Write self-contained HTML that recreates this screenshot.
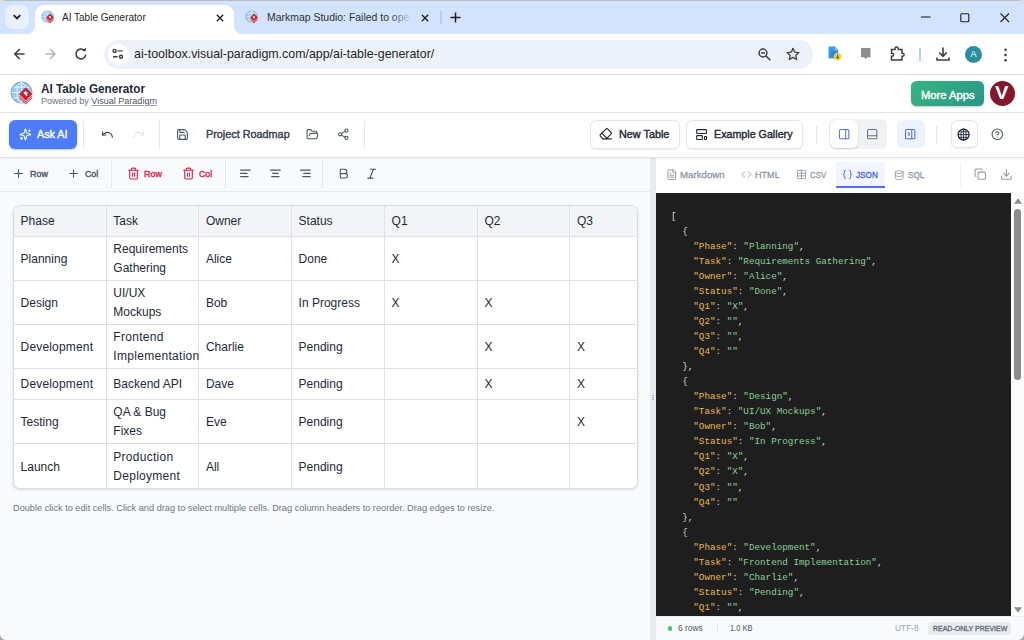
<!DOCTYPE html>
<html lang="en">
<head>
<meta charset="utf-8">
<title>AI Table Generator</title>
<style>
*{box-sizing:border-box;margin:0;padding:0}
html,body{width:1024px;height:640px;overflow:hidden;background:#fff;font-family:"Liberation Sans",sans-serif;color:#1f2937}
.abs{position:absolute}
svg{display:block;position:absolute;overflow:visible}
.ic{fill:none;stroke:currentColor;stroke-width:2;stroke-linecap:round;stroke-linejoin:round}
.t{position:absolute;white-space:nowrap;transform-origin:0 0;line-height:1}
.b{font-weight:bold}
.sb{-webkit-text-stroke:.4px}
.sb2{-webkit-text-stroke:.32px}
/* ---------- browser chrome ---------- */
#tabstrip{position:absolute;left:0;top:0;width:1024px;height:34px;background:#d3e3fd;box-shadow:inset 0 1px 0 #b9bcc2}
#tab1{position:absolute;left:35px;top:5px;width:199px;height:29px;background:#fff;border-radius:9px 9px 0 0}
#navbar{position:absolute;left:0;top:35px;width:1024px;height:40px;background:#fff;border-bottom:1px solid #dde1e8}
#urlpill{position:absolute;left:104px;top:4.5px;width:708.5px;height:29px;border-radius:14.5px;background:#edf2fa}
/* ---------- app header ---------- */
#apphead{position:absolute;left:0;top:75px;width:1024px;height:38px;background:#fff;border-bottom:1px solid #e3e5ea}
#moreapps{position:absolute;left:911.4px;top:5.6px;width:72.4px;height:25px;border-radius:5.5px;background:linear-gradient(135deg,#37b481,#2a9689);box-shadow:0 1px 2px rgba(0,0,0,.22)}
#avatar{position:absolute;left:989.5px;top:5.5px;width:25px;height:25px;border-radius:50%;background:#86162c}
/* ---------- main toolbar ---------- */
#maintb{position:absolute;left:0;top:113px;width:1024px;height:45px;background:#fff;border-bottom:1px solid #dfe2e8;box-shadow:0 1px 2px rgba(0,0,0,.06);z-index:2}
#askai{position:absolute;left:9.4px;top:7px;width:67.9px;height:28.6px;border-radius:6px;background:#4d7cf8;box-shadow:0 1px 2px rgba(60,90,200,.35)}
.vsep{position:absolute;width:1px;background:#e5e7eb}
.btn{position:absolute;height:28.5px;border:1px solid #e3e6eb;border-radius:6px;background:#fff;box-shadow:0 1px 2px rgba(0,0,0,.07)}
/* ---------- left pane ---------- */
#left{position:absolute;left:0;top:158px;width:650px;height:482px;background:#f8fafc}
#ltb{position:absolute;left:0;top:0;width:650px;height:34px;background:#f8fafc;border-bottom:1px solid #e8eaee}
#tblwrap{position:absolute;left:12.5px;top:46.5px;width:625.4px;height:284px;border:1px solid #d8dbe2;border-radius:7px;overflow:hidden;background:#fff;box-shadow:0 1px 3px rgba(0,0,0,.12)}
.hl{position:absolute;left:0;width:626px;height:1px;background:#dfe1e8}
.vl{position:absolute;top:0;width:1px;height:284px;background:#dfe1e8}
.c{position:absolute;white-space:nowrap;font-size:12px;line-height:18.75px;color:#1f2937}
/* ---------- splitter ---------- */
#split{position:absolute;left:650px;top:158px;width:6px;height:482px;background:#e9ebf0}
#split i{position:absolute;left:2px;top:237px;width:2px;height:6px;background:repeating-linear-gradient(180deg,#aeb3bd 0 1px,transparent 1px 2px)}
/* ---------- right pane ---------- */
#right{position:absolute;left:656px;top:158px;width:368px;height:482px;background:#fff}
#code{position:absolute;left:0;top:35px;width:355px;height:422.6px;background:#1e1e1e;overflow:hidden}
pre{position:absolute;left:15.4px;top:15.7px;font-family:"Liberation Mono",monospace;font-size:9.7px;line-height:15.040px;color:#d4d4d4;white-space:pre;transform-origin:0 0;transform:scaleX(.957)}
.k{color:#e8ba52}.s{color:#8ad097}
#sbar{position:absolute;left:355px;top:35px;width:13px;height:423px;background:#fbfbfb}
#status{position:absolute;left:0;top:457.6px;width:368px;height:24.4px;background:#f9fafb;border-top:1px solid #eceef1;font-size:9px;color:#6b7280}
</style>
</head>
<body>
<!-- ================= browser chrome ================= -->
<div id="tabstrip">
  <div class="abs" style="left:5px;top:5px;width:24px;height:24px;border-radius:8px;background:#e9f0fe"></div>
  <svg style="left:12.2px;top:13.2px" width="10" height="8" viewBox="0 0 10 8"><path d="M1.7 2.2 L5 5.5 L8.3 2.2" fill="none" stroke="#1f1f1f" stroke-width="1.8"/></svg>
  <div id="tab1"></div>
  <!-- tab flare curves -->
  <svg style="left:27px;top:26px" width="8" height="8" viewBox="0 0 8 8"><path d="M8 0 V8 H0 A8 8 0 0 0 8 0Z" fill="#fff"/></svg>
  <svg style="left:234px;top:26px" width="8" height="8" viewBox="0 0 8 8"><path d="M0 0 V8 H8 A8 8 0 0 1 0 0Z" fill="#fff"/></svg>
  <!-- favicon 1 -->
  <svg style="left:41.2px;top:9.9px" width="13.2" height="13.2" viewBox="0 0 24 24"><circle cx="12" cy="12" r="10.8" fill="#93cdf1" stroke="#8fa9b3" stroke-width="1.2"/><g fill="none" stroke="#e8f5fd" stroke-width="1"><path d="M1.5 12 H22.5 M3.5 6.5 H20.5 M3.5 17.5 H20.5"/><ellipse cx="12" cy="12" rx="4.8" ry="10.5"/><path d="M12 1.5 V22.5"/></g><path d="M16.4 10.5 L23.4 17.5 L16.4 24.5 L9.4 17.5 Z" fill="#c8202f"/><path d="M16.4 9.4 L23.4 16.4 L16.4 23.4 L9.4 16.4 Z" fill="#fff"/><path d="M16.4 8.6 L23.4 15.6 L16.4 22.6 L9.4 15.6 Z" fill="#c8202f"/><path d="M16.4 7.5 L23.4 14.5 L16.4 21.5 L9.4 14.5 Z" fill="#fff"/><path d="M16.4 6.5 L23.4 13.5 L16.4 20.5 L9.4 13.5 Z" fill="#c8202f"/><path d="M16.2 10.4 L18.6 12.8 L17.4 14 L18.4 15 L17.4 16 L14 12.6 Z" fill="#fff"/></svg>
  <div class="t" style="left:62px;top:12.2px;font-size:11.3px;color:#1f1f1f;transform:scaleX(.885)">AI Table Generator</div>
  <svg style="left:216px;top:13.5px" width="8" height="8" viewBox="0 0 8 8"><path d="M0.8 0.8 L7.2 7.2 M7.2 0.8 L0.8 7.2" stroke="#1f1f1f" stroke-width="1.35" fill="none"/></svg>
  <!-- tab 2 -->
  <svg style="left:245.4px;top:9.9px" width="13.2" height="13.2" viewBox="0 0 24 24"><circle cx="12" cy="12" r="10.8" fill="#93cdf1" stroke="#8fa9b3" stroke-width="1.2"/><g fill="none" stroke="#e8f5fd" stroke-width="1"><path d="M1.5 12 H22.5 M3.5 6.5 H20.5 M3.5 17.5 H20.5"/><ellipse cx="12" cy="12" rx="4.8" ry="10.5"/><path d="M12 1.5 V22.5"/></g><path d="M16.4 10.5 L23.4 17.5 L16.4 24.5 L9.4 17.5 Z" fill="#c8202f"/><path d="M16.4 9.4 L23.4 16.4 L16.4 23.4 L9.4 16.4 Z" fill="#fff"/><path d="M16.4 8.6 L23.4 15.6 L16.4 22.6 L9.4 15.6 Z" fill="#c8202f"/><path d="M16.4 7.5 L23.4 14.5 L16.4 21.5 L9.4 14.5 Z" fill="#fff"/><path d="M16.4 6.5 L23.4 13.5 L16.4 20.5 L9.4 13.5 Z" fill="#c8202f"/><path d="M16.2 10.4 L18.6 12.8 L17.4 14 L18.4 15 L17.4 16 L14 12.6 Z" fill="#fff"/></svg>
  <div class="abs" style="left:266.5px;top:8px;width:145px;height:18px;overflow:hidden"><div class="t" style="left:0;top:4.2px;font-size:11.3px;color:#2d3034;transform:scaleX(.925)">Markmap Studio: Failed to open</div><div class="abs" style="right:0;top:0;width:22px;height:18px;background:linear-gradient(90deg,rgba(211,227,253,0),#d3e3fd)"></div></div>
  <svg style="left:420.5px;top:13.5px" width="8" height="8" viewBox="0 0 8 8"><path d="M0.8 0.8 L7.2 7.2 M7.2 0.8 L0.8 7.2" stroke="#1f1f1f" stroke-width="1.35" fill="none"/></svg>
  <div class="abs" style="left:440px;top:11px;width:1.5px;height:12.5px;background:#b4cbf7"></div>
  <svg style="left:449.5px;top:12px" width="11" height="11" viewBox="0 0 11 11"><path d="M5.5 0.5 V10.5 M0.5 5.5 H10.5" stroke="#1f1f1f" stroke-width="1.5" fill="none"/></svg>
  <!-- window controls -->
  <svg style="left:921px;top:16.2px" width="10" height="2" viewBox="0 0 10 2"><path d="M0 1 H9.5" stroke="#1f1f1f" stroke-width="1.1"/></svg>
  <svg style="left:960px;top:12.6px" width="10" height="10" viewBox="0 0 10 10"><rect x="0.8" y="0.8" width="8" height="8" rx="1" fill="none" stroke="#1f1f1f" stroke-width="1.1"/></svg>
  <svg style="left:999.5px;top:12.6px" width="10" height="10" viewBox="0 0 10 10"><path d="M0.5 0.5 L9 9 M9 0.5 L0.5 9" stroke="#1f1f1f" stroke-width="1.1" fill="none"/></svg>
</div>
<div id="navbar">
  <!-- back / forward / reload -->
  <svg style="left:13px;top:12px" width="14" height="14" viewBox="0 0 14 14"><path d="M11.6 7 H2 M6.8 2 L1.8 7 L6.8 12" fill="none" stroke="#3c4043" stroke-width="1.6"/></svg>
  <svg style="left:43px;top:12px" width="14" height="14" viewBox="0 0 14 14"><path d="M2.2 7 H11.8 M7 2 L12 7 L7 12" fill="none" stroke="#b4b7bb" stroke-width="1.6"/></svg>
  <svg style="left:74px;top:12px" width="14" height="14" viewBox="0 0 14 14"><path d="M11.8 7.6 A4.9 4.9 0 1 1 10.3 3.4" fill="none" stroke="#3c4043" stroke-width="1.6"/><path d="M8 4.3 H11.8 V0.5 Z" fill="#3c4043"/></svg>
  <div id="urlpill">
    <div class="abs" style="left:3.5px;top:4.2px;width:21px;height:21px;border-radius:10.5px;background:#fff"></div>
    <svg style="left:8px;top:8.7px" width="12" height="12" viewBox="0 0 12 12"><g fill="none" stroke="#3c4043" stroke-width="1.4"><path d="M5.6 2.9 H10.6 M1 8.7 H5.6"/><circle cx="2.6" cy="2.9" r="1.5"/><circle cx="9" cy="8.7" r="1.5"/></g></svg>
    <div class="t" style="left:30px;top:7.5px;font-size:13px;color:#1f1f1f;transform:scaleX(.953)">ai-toolbox.visual-paradigm.com/app/ai-table-generator/</div>
    <!-- zoom & star -->
    <svg style="left:654px;top:8.5px" width="13" height="13" viewBox="0 0 13 13"><g fill="none" stroke="#3c4043" stroke-width="1.5"><circle cx="5" cy="5" r="3.9"/><path d="M8 8 L12.3 12.3 M3 5 H7"/></g></svg>
    <svg style="left:680.5px;top:6.5px" width="16" height="16" viewBox="0 0 24 24"><path d="M12 3.5 L14.6 9.3 L20.9 9.9 L16.1 14.1 L17.5 20.3 L12 17 L6.5 20.3 L7.9 14.1 L3.1 9.9 L9.4 9.3 Z" fill="none" stroke="#3c4043" stroke-width="2" stroke-linejoin="round"/></svg>
  </div>
  <!-- extension icons -->
  <svg style="left:828px;top:10.5px" width="15" height="18" viewBox="0 0 15 18"><path d="M0.5 1.5 Q0.5 0.5 1.5 0.5 H6.8 L10.2 3.9 V11.5 Q10.2 12.5 9.2 12.5 H1.5 Q0.5 12.5 0.5 11.5 Z" fill="#3f97ea"/><path d="M6.8 0.5 L10.2 3.9 H6.8 Z" fill="#6fd0d8"/><path d="M2.5 6 H7.5 M2.5 8 H7.5 M2.5 10 H5.5" stroke="#2a6fc0" stroke-width="0.9"/><circle cx="9.6" cy="10.7" r="3.7" fill="#f4cf2b"/><path d="M9.6 8.7 V12.2 M8.1 10.9 L9.6 12.4 L11.1 10.9" stroke="#5a4700" stroke-width="0.9" fill="none"/></svg>
  <svg style="left:861.3px;top:13.4px" width="10" height="12" viewBox="0 0 10 12"><path d="M0 0 H9.5 V9.2 H6.3 L4.75 11.3 L3.2 9.2 H0 Z" fill="#8d8d8d"/></svg>
  <svg style="left:889px;top:10.3px" width="16" height="16" viewBox="0 0 16 16"><path d="M2.5 4.4 H6 V3.7 A1.6 1.6 0 1 1 9.2 3.7 V4.4 H13 V8.2 H13.6 A1.5 1.5 0 1 1 13.6 11.2 H13 V15 H2.5 V11.2 H3.1 A1.5 1.5 0 1 0 3.1 8.2 H2.5 Z" fill="none" stroke="#3c4043" stroke-width="1.5" stroke-linejoin="miter"/></svg>
  <div class="abs" style="left:919px;top:13px;width:1.5px;height:12.5px;background:#b9cef7"></div>
  <svg style="left:935.5px;top:12px" width="14" height="14" viewBox="0 0 14 14"><path d="M7 0.5 V9 M3.2 5.5 L7 9.3 L10.8 5.5 M1 10.5 V13 H13 V10.5" fill="none" stroke="#3c4043" stroke-width="1.6"/></svg>
  <div class="abs" style="left:965px;top:10.5px;width:17px;height:17px;border-radius:50%;background:#2b8e9e"></div>
  <div class="t" style="left:970.5px;top:15px;font-size:9px;color:#fff">A</div>
  <svg style="left:1003.5px;top:12.5px" width="3" height="14" viewBox="0 0 3 14"><circle cx="1.5" cy="1.7" r="1.3" fill="#3c4043"/><circle cx="1.5" cy="7" r="1.3" fill="#3c4043"/><circle cx="1.5" cy="12.3" r="1.3" fill="#3c4043"/></svg>
</div>
<!-- ================= app header ================= -->
<div id="apphead">
  <svg style="left:10px;top:5.5px" width="23" height="23" viewBox="0 0 24 24"><circle cx="12" cy="12" r="10.8" fill="#93cdf1" stroke="#8fa9b3" stroke-width="1.2"/><g fill="none" stroke="#e8f5fd" stroke-width="1"><path d="M1.5 12 H22.5 M3.5 6.5 H20.5 M3.5 17.5 H20.5"/><ellipse cx="12" cy="12" rx="4.8" ry="10.5"/><path d="M12 1.5 V22.5"/></g><path d="M16.4 10.5 L23.4 17.5 L16.4 24.5 L9.4 17.5 Z" fill="#c8202f"/><path d="M16.4 9.4 L23.4 16.4 L16.4 23.4 L9.4 16.4 Z" fill="#fff"/><path d="M16.4 8.6 L23.4 15.6 L16.4 22.6 L9.4 15.6 Z" fill="#c8202f"/><path d="M16.4 7.5 L23.4 14.5 L16.4 21.5 L9.4 14.5 Z" fill="#fff"/><path d="M16.4 6.5 L23.4 13.5 L16.4 20.5 L9.4 13.5 Z" fill="#c8202f"/><path d="M16.2 10.4 L18.6 12.8 L17.4 14 L18.4 15 L17.4 16 L14 12.6 Z" fill="#fff"/></svg>
  <div class="t b" style="left:41.3px;top:7.6px;font-size:12.3px;color:#1f2937;transform:scaleX(.953)">AI Table Generator</div>
  <div class="t" style="left:41.3px;top:22px;font-size:9px;color:#6b7280;transform:scaleX(1.005)">Powered by <u style="color:#4b5563;text-decoration-color:#9ca3af">Visual Paradigm</u></div>
  <div id="moreapps"></div>
  <div class="t sb" style="left:920.8px;top:14.5px;font-size:11.4px;color:#fff;transform:scaleX(0.986)">More Apps</div>
  <div id="avatar"></div>
  <div class="t b" style="left:995px;top:8.9px;font-size:18.7px;color:#fff;transform:scaleX(1.08)">V</div>
</div>

<!-- ================= main toolbar ================= -->
<div id="maintb">
  <div id="askai"></div>
  <svg class="ic" viewBox="0 0 24 24" style="left:18.65px;top:14.8px;width:12.8px;height:12.8px;color:#fff"><path d="M9.937 15.5A2 2 0 0 0 8.5 14.063l-6.135-1.582a.5.5 0 0 1 0-.962L8.5 9.936A2 2 0 0 0 9.937 8.5l1.582-6.135a.5.5 0 0 1 .963 0L14.063 8.5A2 2 0 0 0 15.5 9.937l6.135 1.581a.5.5 0 0 1 0 .964L15.5 14.063a2 2 0 0 0-1.437 1.437l-1.582 6.135a.5.5 0 0 1-.963 0z"/><path d="M19.5 3.3v3.4"/><path d="M21.2 5h-3.4"/><circle cx="4.6" cy="19.4" r="1.7" fill="#fff"/></svg>
  <div class="t sb" style="left:37.2px;top:15.8px;font-size:11.4px;color:#fff;transform:scaleX(0.944)">Ask AI</div>
  <div class="vsep" style="left:83px;top:8px;height:27px"></div>
  <svg class="ic" viewBox="0 0 24 24" style="left:101px;top:14.9px;width:13px;height:13px;color:#374151"><path d="M3 7v6h6"/><path d="M21 17a9 9 0 0 0-9-9 9 9 0 0 0-6 2.3L3 13"/></svg>
  <svg class="ic" viewBox="0 0 24 24" style="left:131.9px;top:14.9px;width:13px;height:13px;color:#dfe2e7"><path d="M21 7v6h-6"/><path d="M3 17a9 9 0 0 1 9-9 9 9 0 0 1 6 2.3l3 2.7"/></svg>
  <div class="vsep" style="left:159px;top:8px;height:27px"></div>
  <svg class="ic" viewBox="0 0 24 24" style="left:176px;top:14.6px;width:13px;height:13px;color:#4b5563"><path d="M15.2 3a2 2 0 0 1 1.4.6l3.8 3.8a2 2 0 0 1 .6 1.4V19a2 2 0 0 1-2 2H5a2 2 0 0 1-2-2V5a2 2 0 0 1 2-2z"/><path d="M17 21v-7a1 1 0 0 0-1-1H8a1 1 0 0 0-1 1v7"/><path d="M7 3v4a1 1 0 0 0 1 1h7"/></svg>
  <div class="t sb" style="left:206px;top:16px;font-size:10.6px;color:#374151;transform:scaleX(1.022)">Project Roadmap</div>
  <svg class="ic" viewBox="0 0 24 24" style="left:306.35px;top:14.55px;width:12.9px;height:12.9px;color:#4b5563"><path d="m6 14 1.5-2.9A2 2 0 0 1 9.24 10H20a2 2 0 0 1 1.94 2.5l-1.54 6a2 2 0 0 1-1.95 1.5H4a2 2 0 0 1-2-2V5a2 2 0 0 1 2-2h3.9a2 2 0 0 1 1.69.9l.81 1.2a2 2 0 0 0 1.67.9H18a2 2 0 0 1 2 2v2"/></svg>
  <svg class="ic" viewBox="0 0 24 24" style="left:337.45px;top:14.7px;width:12.6px;height:12.6px;color:#4b5563"><circle cx="18" cy="5" r="3"/><circle cx="6" cy="12" r="3"/><circle cx="18" cy="19" r="3"/><line x1="8.59" x2="15.42" y1="13.51" y2="17.49"/><line x1="15.41" x2="8.59" y1="6.51" y2="10.49"/></svg>
  <div class="vsep" style="left:364px;top:8px;height:27px"></div>

  <div class="btn" style="left:589.5px;top:7px;width:90px"></div>
  <svg class="ic" viewBox="0 0 24 24" style="left:599px;top:14.4px;width:13.5px;height:13.5px;color:#1f2937"><path d="m7 21-4.3-4.3c-1-1-1-2.5 0-3.4l9.6-9.6c1-1 2.5-1 3.4 0l5.6 5.6c1 1 1 2.5 0 3.4L13 21"/><path d="M22 21H7"/><path d="m5 11 9 9"/></svg>
  <div class="t sb" style="left:619px;top:16px;font-size:10.6px;color:#1f2937;transform:scaleX(1.022)">New Table</div>
  <div class="btn" style="left:686px;top:7px;width:117px"></div>
  <svg class="ic" viewBox="0 0 24 24" style="left:695.4px;top:14.6px;width:13.1px;height:13.1px;color:#1f2937"><rect width="18" height="7" x="3" y="3" rx="1"/><rect width="10.5" height="7" x="3" y="14" rx="1"/><rect width="3.6" height="5.4" x="17.4" y="15.6" rx="0.8"/></svg>
  <div class="t sb" style="left:714.2px;top:16px;font-size:10.6px;color:#1f2937;transform:scaleX(1.01)">Example Gallery</div>
  <div class="vsep" style="left:815.5px;top:12.5px;height:17.5px"></div>
  <!-- segmented control -->
  <div class="abs" style="left:829px;top:5.5px;width:58px;height:30.5px;border-radius:7px;background:#f1f2f5"></div>
  <div class="abs" style="left:829.5px;top:6.5px;width:28.5px;height:28.5px;border-radius:6px;background:#fff;box-shadow:0 1px 2px rgba(0,0,0,.18)"></div>
  <svg class="ic" viewBox="0 0 24 24" style="left:837.65px;top:15.05px;width:12.4px;height:12.4px;color:#4f6ef7"><rect width="18" height="18" x="3" y="3" rx="2"/><path d="M15 3v18"/></svg>
  <svg class="ic" viewBox="0 0 24 24" style="left:865.7px;top:15.05px;width:12.4px;height:12.4px;color:#6b7280"><rect width="18" height="18" x="3" y="3" rx="2"/><path d="M3 15h18"/></svg>
  <div class="abs" style="left:897px;top:7.3px;width:27.5px;height:28px;border-radius:6px;background:#ecf2ff"></div>
  <svg class="ic" viewBox="0 0 24 24" style="left:904.3px;top:15.05px;width:12.4px;height:12.4px;color:#4f6ef7"><rect width="18" height="18" x="3" y="3" rx="2"/><path d="M15 3v18"/><path d="m8 9 3 3-3 3"/></svg>
  <div class="vsep" style="left:936px;top:12.5px;height:17.5px"></div>
  <div class="btn" style="left:950.5px;top:7.3px;width:27px;height:28px"></div>
  <svg class="ic" viewBox="0 0 24 24" style="left:957.4px;top:14.7px;width:13.2px;height:13.2px;color:#111827;stroke-width:2.1"><circle cx="12" cy="12" r="10"/><g stroke-width="1.45"><ellipse cx="12" cy="12" rx="4.8" ry="10"/><path d="M12 2v20"/><path d="M2 12h20"/><path d="M3.6 7h16.8"/><path d="M3.6 17h16.8"/></g></svg>
  <svg class="ic" viewBox="0 0 24 24" style="left:991.2px;top:14.9px;width:12.65px;height:12.65px;color:#4b5563"><circle cx="12" cy="12" r="10"/><path d="M9.09 9a3 3 0 0 1 5.83 1c0 2-3 3-3 3"/><path d="M12 17h.01"/></svg>
</div>
<!-- ================= left pane ================= -->
<div id="left">
 <div id="ltb">
  <svg class="ic" viewBox="0 0 24 24" style="left:11.55px;top:9.05px;width:13.1px;height:13.1px;color:#4b5563;stroke-width:2"><path d="M5 12h14"/><path d="M12 5v14"/></svg>
  <div class="t sb" style="left:29.6px;top:10.95px;font-size:9.7px;color:#4b5563;transform:scaleX(0.922)">Row</div>
  <svg class="ic" viewBox="0 0 24 24" style="left:67.35px;top:9.05px;width:13.1px;height:13.1px;color:#4b5563;stroke-width:2"><path d="M5 12h14"/><path d="M12 5v14"/></svg>
  <div class="t sb" style="left:84.8px;top:10.95px;font-size:9.7px;color:#4b5563;transform:scaleX(0.907)">Col</div>
  <div class="vsep" style="left:111px;top:2px;height:28px"></div>
  <svg class="ic" viewBox="0 0 24 24" style="left:126.9px;top:9px;width:13px;height:13px;color:#e11d48;stroke-width:2"><path d="M3 6h18"/><path d="M19 6v14c0 1-1 2-2 2H7c-1 0-2-1-2-2V6"/><path d="M8 6V4c0-1 1-2 2-2h4c1 0 2 1 2 2v2"/><line x1="10" x2="10" y1="11" y2="17"/><line x1="14" x2="14" y1="11" y2="17"/></svg>
  <div class="t sb" style="left:144px;top:10.95px;font-size:9.7px;color:#e11d48;transform:scaleX(0.922)">Row</div>
  <svg class="ic" viewBox="0 0 24 24" style="left:181.9px;top:9px;width:13px;height:13px;color:#e11d48;stroke-width:2"><path d="M3 6h18"/><path d="M19 6v14c0 1-1 2-2 2H7c-1 0-2-1-2-2V6"/><path d="M8 6V4c0-1 1-2 2-2h4c1 0 2 1 2 2v2"/><line x1="10" x2="10" y1="11" y2="17"/><line x1="14" x2="14" y1="11" y2="17"/></svg>
  <div class="t sb" style="left:198.9px;top:10.95px;font-size:9.7px;color:#e11d48;transform:scaleX(0.907)">Col</div>
  <div class="vsep" style="left:225px;top:2px;height:28px"></div>
  <svg class="ic" viewBox="0 0 24 24" style="left:239.2px;top:9.2px;width:12.8px;height:12.8px;color:#4b5563;stroke-width:2.2"><path d="M15 12H3"/><path d="M17 18H3"/><path d="M21 6H3"/></svg>
  <svg class="ic" viewBox="0 0 24 24" style="left:268.7px;top:9.2px;width:12.8px;height:12.8px;color:#4b5563;stroke-width:2.2"><path d="M17 12H7"/><path d="M19 18H5"/><path d="M21 6H3"/></svg>
  <svg class="ic" viewBox="0 0 24 24" style="left:298.6px;top:9.2px;width:12.8px;height:12.8px;color:#4b5563;stroke-width:2.2"><path d="M21 12H9"/><path d="M21 18H7"/><path d="M21 6H3"/></svg>
  <div class="vsep" style="left:322px;top:2px;height:28px"></div>
  <svg class="ic" viewBox="0 0 24 24" style="left:336.6px;top:9.2px;width:13.2px;height:13.2px;color:#4b5563;stroke-width:2"><path d="M6 12h9a4 4 0 0 1 0 8H7a1 1 0 0 1-1-1V5a1 1 0 0 1 1-1h7a4 4 0 0 1 0 8"/></svg>
  <svg class="ic" viewBox="0 0 24 24" style="left:365.3px;top:9.1px;width:13.4px;height:13.4px;color:#4b5563;stroke-width:2"><line x1="19" x2="10" y1="4" y2="4"/><line x1="14" x2="5" y1="20" y2="20"/><line x1="15" x2="9" y1="4" y2="20"/></svg>
 </div>
 <div id="tblwrap">
  <div class="abs" style="left:0;top:0;width:626px;height:30.3px;background:#f3f4f6"></div>
  <div class="hl" style="top:30.3px"></div>
  <div class="hl" style="top:74.5px"></div>
  <div class="hl" style="top:118.4px"></div>
  <div class="hl" style="top:162.7px"></div>
  <div class="hl" style="top:193.5px"></div>
  <div class="hl" style="top:237.0px"></div>
  <div class="vl" style="left:92.1px"></div>
  <div class="vl" style="left:184.7px"></div>
  <div class="vl" style="left:277.45px"></div>
  <div class="vl" style="left:370.4px"></div>
  <div class="vl" style="left:463.3px"></div>
  <div class="vl" style="left:555.8px"></div>
  <div class="c" style="left:7.1px;top:6.0px">Phase</div>
  <div class="c" style="left:99.8px;top:6.0px">Task</div>
  <div class="c" style="left:192.4px;top:6.0px">Owner</div>
  <div class="c" style="left:285.1px;top:6.0px">Status</div>
  <div class="c" style="left:378.1px;top:6.0px">Q1</div>
  <div class="c" style="left:471.0px;top:6.0px">Q2</div>
  <div class="c" style="left:563.5px;top:6.0px">Q3</div>
  <div class="c" style="left:7.1px;top:44.2px">Planning</div>
  <div class="c" style="left:99.8px;top:34.4px">Requirements<br>Gathering</div>
  <div class="c" style="left:192.4px;top:44.2px">Alice</div>
  <div class="c" style="left:285.1px;top:44.2px">Done</div>
  <div class="c" style="left:378.1px;top:44.2px">X</div>
  <div class="c" style="left:7.1px;top:88.3px">Design</div>
  <div class="c" style="left:99.8px;top:78.5px">UI/UX<br>Mockups</div>
  <div class="c" style="left:192.4px;top:88.3px">Bob</div>
  <div class="c" style="left:285.1px;top:88.3px">In Progress</div>
  <div class="c" style="left:378.1px;top:88.3px">X</div>
  <div class="c" style="left:471.0px;top:88.3px">X</div>
  <div class="c" style="left:7.1px;top:132.4px;letter-spacing:0.17px">Development</div>
  <div class="c" style="left:99.8px;top:122.7px;letter-spacing:0.3px">Frontend<br>Implementation</div>
  <div class="c" style="left:192.4px;top:132.4px">Charlie</div>
  <div class="c" style="left:285.1px;top:132.4px">Pending</div>
  <div class="c" style="left:471.0px;top:132.4px">X</div>
  <div class="c" style="left:563.5px;top:132.4px">X</div>
  <div class="c" style="left:7.1px;top:169.9px;letter-spacing:0.17px">Development</div>
  <div class="c" style="left:99.8px;top:169.9px">Backend API</div>
  <div class="c" style="left:192.4px;top:169.9px">Dave</div>
  <div class="c" style="left:285.1px;top:169.9px">Pending</div>
  <div class="c" style="left:471.0px;top:169.9px">X</div>
  <div class="c" style="left:563.5px;top:169.9px">X</div>
  <div class="c" style="left:7.1px;top:207.4px">Testing</div>
  <div class="c" style="left:99.8px;top:197.9px">QA &amp; Bug<br>Fixes</div>
  <div class="c" style="left:192.4px;top:207.4px">Eve</div>
  <div class="c" style="left:285.1px;top:207.4px">Pending</div>
  <div class="c" style="left:563.5px;top:207.4px">X</div>
  <div class="c" style="left:7.1px;top:252.1px">Launch</div>
  <div class="c" style="left:99.8px;top:242.3px;letter-spacing:0.28px">Production<br>Deployment</div>
  <div class="c" style="left:192.4px;top:252.1px">All</div>
  <div class="c" style="left:285.1px;top:252.1px">Pending</div>
 </div>
 <div class="t" style="left:12.5px;top:345px;font-size:9.4px;color:#70767f;transform:scaleX(.981)">Double click to edit cells. Click and drag to select multiple cells. Drag column headers to reorder. Drag edges to resize.</div>
</div>
<div id="split"><i></i></div>
<!-- ================= right pane ================= -->
<div id="right">
 <div class="abs" style="left:179.5px;top:4px;width:49.5px;height:26px;background:#f2f5ff;border-radius:3px 3px 0 0"></div>
 <div class="abs" style="left:179.5px;top:28px;width:49.5px;height:2px;background:#4f6ef7"></div>
  <svg class="ic" viewBox="0 0 24 24" style="left:10.25px;top:10.85px;width:11.5px;height:11.5px;color:#9299a6;stroke-width:2"><path d="M15 2H6a2 2 0 0 0-2 2v16a2 2 0 0 0 2 2h12a2 2 0 0 0 2-2V7Z"/><path d="M14 2v4a2 2 0 0 0 2 2h4"/><path d="M10 9H8"/><path d="M16 13H8"/><path d="M16 17H8"/></svg>
  <div class="t sb2" style="left:24.2px;top:12px;font-size:9.8px;color:#9299a6;transform:scaleX(0.99)">Markdown</div>
  <svg class="ic" viewBox="0 0 24 24" style="left:85.15px;top:11.1px;width:10.9px;height:10.9px;color:#9299a6;stroke-width:2"><polyline points="16 18 22 12 16 6"/><polyline points="8 6 2 12 8 18"/></svg>
  <div class="t sb2" style="left:99.2px;top:12px;font-size:9.8px;color:#9299a6;transform:scaleX(0.926)">HTML</div>
  <svg class="ic" viewBox="0 0 24 24" style="left:140.2px;top:11.15px;width:11px;height:11px;color:#9299a6;stroke-width:2"><path d="M12 3v18"/><rect width="18" height="18" x="3" y="3" rx="2"/><path d="M3 9h18"/><path d="M3 15h18"/></svg>
  <div class="t sb2" style="left:154px;top:12px;font-size:9.8px;color:#9299a6;transform:scaleX(0.8)">CSV</div>
  <svg class="ic" viewBox="0 0 24 24" style="left:185.7px;top:11.15px;width:10.9px;height:10.9px;color:#4361ee;stroke-width:2"><path d="M8 3H7a2 2 0 0 0-2 2v5a2 2 0 0 1-2 2 2 2 0 0 1 2 2v5c0 1.1.9 2 2 2h1"/><path d="M16 21h1a2 2 0 0 0 2-2v-5c0-1.1.9-2 2-2a2 2 0 0 1-2-2V5a2 2 0 0 0-2-2h-1"/></svg>
  <div class="t sb2" style="left:200.3px;top:12px;font-size:9.8px;color:#4361ee;transform:scaleX(0.835)">JSON</div>
  <svg class="ic" viewBox="0 0 24 24" style="left:238.15px;top:11.6px;width:10.4px;height:10.4px;color:#9299a6;stroke-width:2"><ellipse cx="12" cy="5" rx="9" ry="3"/><path d="M3 5V19A9 3 0 0 0 21 19V5"/><path d="M3 12A9 3 0 0 0 21 12"/></svg>
  <div class="t sb2" style="left:252px;top:12px;font-size:9.8px;color:#9299a6;transform:scaleX(0.835)">SQL</div>
  <div class="vsep" style="left:303.5px;top:5px;height:24px;background:#eff1f4"></div>
  <svg class="ic" viewBox="0 0 24 24" style="left:317.5px;top:10.25px;width:12.4px;height:12.4px;color:#9299a6;stroke-width:2"><rect width="14" height="14" x="8" y="8" rx="2" ry="2"/><path d="M4 16c-1.1 0-2-.9-2-2V4c0-1.1.9-2 2-2h10c1.1 0 2 .9 2 2"/></svg>
  <svg class="ic" viewBox="0 0 24 24" style="left:344.35px;top:10.4px;width:12.8px;height:12.8px;color:#9299a6;stroke-width:2"><path d="M21 15v4a2 2 0 0 1-2 2H5a2 2 0 0 1-2-2v-4"/><polyline points="7 10 12 15 17 10"/><line x1="12" x2="12" y1="15" y2="3"/></svg>
 <div id="code"><pre>[
  {
    <span class="k">"Phase"</span>: <span class="s">"Planning"</span>,
    <span class="k">"Task"</span>: <span class="s">"Requirements Gathering"</span>,
    <span class="k">"Owner"</span>: <span class="s">"Alice"</span>,
    <span class="k">"Status"</span>: <span class="s">"Done"</span>,
    <span class="k">"Q1"</span>: <span class="s">"X"</span>,
    <span class="k">"Q2"</span>: <span class="s">""</span>,
    <span class="k">"Q3"</span>: <span class="s">""</span>,
    <span class="k">"Q4"</span>: <span class="s">""</span>
  },
  {
    <span class="k">"Phase"</span>: <span class="s">"Design"</span>,
    <span class="k">"Task"</span>: <span class="s">"UI/UX Mockups"</span>,
    <span class="k">"Owner"</span>: <span class="s">"Bob"</span>,
    <span class="k">"Status"</span>: <span class="s">"In Progress"</span>,
    <span class="k">"Q1"</span>: <span class="s">"X"</span>,
    <span class="k">"Q2"</span>: <span class="s">"X"</span>,
    <span class="k">"Q3"</span>: <span class="s">""</span>,
    <span class="k">"Q4"</span>: <span class="s">""</span>
  },
  {
    <span class="k">"Phase"</span>: <span class="s">"Development"</span>,
    <span class="k">"Task"</span>: <span class="s">"Frontend Implementation"</span>,
    <span class="k">"Owner"</span>: <span class="s">"Charlie"</span>,
    <span class="k">"Status"</span>: <span class="s">"Pending"</span>,
    <span class="k">"Q1"</span>: <span class="s">""</span>,</pre></div>
 <div id="sbar">
  <svg style="left:2.7px;top:4.5px" width="8" height="6" viewBox="0 0 8 6"><path d="M0 5.7 L4 0.2 L8 5.7 Z" fill="#8b8b8b"/></svg>
  <div class="abs" style="left:3px;top:15.8px;width:7.4px;height:171.7px;border-radius:3.7px;background:#8c8c8c"></div>
  <svg style="left:2.5px;top:413.5px" width="8" height="6" viewBox="0 0 8 6"><path d="M0 0.3 L4 5.8 L8 0.3 Z" fill="#8b8b8b"/></svg>
 </div>
 <div id="status">
  <div class="abs" style="left:11.7px;top:9.6px;width:4.6px;height:4.6px;border-radius:2.3px;background:#34c767"></div>
  <div class="t" style="left:22px;top:7.6px;font-size:8.8px;color:#4b5563;transform:scaleX(.95)">6 rows</div>
  <div class="vsep" style="left:60.5px;top:7px;height:9px"></div>
  <div class="t" style="left:74px;top:7.6px;font-size:8.8px;color:#4b5563;transform:scaleX(.85)">1.0 KB</div>
  <div class="t" style="left:238.5px;top:7.6px;font-size:8.8px;color:#9ca3af;transform:scaleX(.95)">UTF-8</div>
  <div class="abs" style="left:272px;top:5.5px;width:83px;height:13px;background:#e9ebef;border-radius:3.5px"></div>
  <div class="t sb2" style="left:276.5px;top:8.3px;font-size:7.4px;color:#636b78;transform:scaleX(0.945)">READ-ONLY PREVIEW</div>
 </div>
</div>
<!-- window corners -->
<svg style="left:0;top:0" width="6" height="6" viewBox="0 0 6 6"><path d="M0 0 H6 A6 6 0 0 0 0 6 Z" fill="#dcdcdc"/></svg>
<svg style="left:1018px;top:0" width="6" height="6" viewBox="0 0 6 6"><path d="M6 0 H0 A6 6 0 0 1 6 6 Z" fill="#dcdcdc"/></svg>
<svg style="left:0;top:634px" width="6" height="6" viewBox="0 0 6 6"><path d="M0 6 H6 A6 6 0 0 1 0 0 Z" fill="#a9a9a9"/></svg>
<svg style="left:1018px;top:634px" width="6" height="6" viewBox="0 0 6 6"><path d="M6 6 H0 A6 6 0 0 0 6 0 Z" fill="#a9a9a9"/></svg>
</body>
</html>
